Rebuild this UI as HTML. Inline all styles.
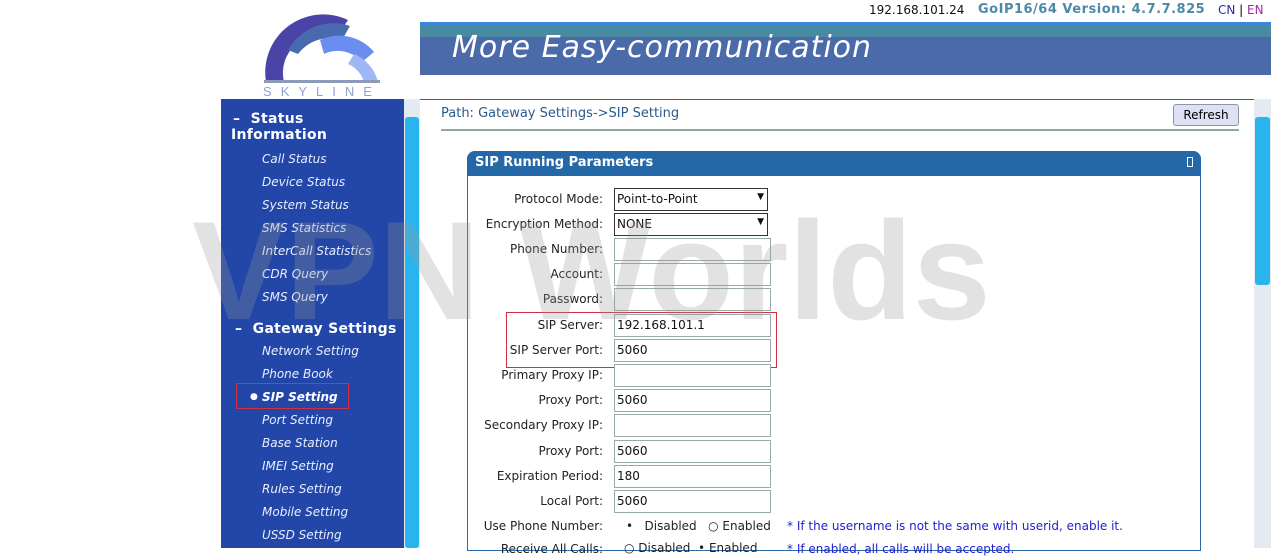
<!DOCTYPE html>
<html><head><meta charset="utf-8"><style>
*{margin:0;padding:0;box-sizing:border-box}
body{width:1272px;height:548px;overflow:hidden;background:#fff;font-family:"DejaVu Sans","Liberation Sans",sans-serif;position:relative}
.a{position:absolute}
.side{left:221px;top:99px;width:183px;height:449px;background:#2347a8;color:#fff}
.hd{position:absolute;font-weight:bold;font-size:14px;letter-spacing:.3px}
.it{position:absolute;left:41px;font-size:12px;font-style:italic;color:#e8eeff}
.lbl{position:absolute;right:669px;font-size:12px;color:#222;text-align:right;white-space:nowrap}
.inp{position:absolute;left:614px;width:157px;height:23px;border:1px solid #9aa;background:#fff;font-size:12px;padding:3px 2px;color:#111}
</style></head><body>
<svg class="a" style="left:258px;top:2px" width="130" height="96" viewBox="0 0 130 96">
<path d="M8 80 A58 58 0 0 1 90 18 L78 36 A38 38 0 0 0 26 80 Z" fill="#4a43a8"/>
<path d="M30 48 A52 52 0 0 1 92 24 L84 38 A40 40 0 0 0 40 52 Z" fill="#4a6ab0"/>
<path d="M62 38 A45 45 0 0 1 116 50 L104 60 A32 32 0 0 0 66 52 Z" fill="#6a8ef0"/>
<path d="M96 52 A40 40 0 0 1 120 80 L106 80 A28 28 0 0 0 90 62 Z" fill="#9fb8f5"/>
<rect x="6" y="78" width="116" height="3" fill="#8a9ab8"/>
<text x="64" y="94" font-size="13" fill="#8ea0d8" text-anchor="middle" letter-spacing="9" font-family="Liberation Sans">SKYLINE</text>
</svg>
<div class="a" style="left:420px;top:22px;width:851px;height:53px;background:#4a6aaa"></div>
<div class="a" style="left:420px;top:22px;width:851px;height:4px;background:#3b86d8"></div>
<div class="a" style="left:420px;top:26px;width:851px;height:11px;background:#4a8aa0"></div>
<div class="a" style="left:452px;top:30px;font-size:30px;font-style:italic;color:#fff;letter-spacing:1px">More Easy-communication</div>
<div class="a" style="left:869px;top:3px;font-size:12px;color:#111">192.168.101.24</div>
<div class="a" style="left:978px;top:2px;font-size:13px;font-weight:bold;color:#4a8aa8;letter-spacing:.5px">GoIP16/64 Version: 4.7.7.825</div>
<div class="a" style="left:1218px;top:3px;font-size:12px;color:#2a2aa0">CN <span style="color:#000">|</span> <span style="color:#a02aa0">EN</span></div>
<div class="a" style="left:420px;top:99px;width:851px;height:1px;background:#556"></div>
<div class="a side">
<div class="hd" style="left:12px;top:12px">–&nbsp; Status<br><span style="margin-left:-2px">Information</span></div>
<div class="it" style="top:53px">Call Status</div>
<div class="it" style="top:76px">Device Status</div>
<div class="it" style="top:99px">System Status</div>
<div class="it" style="top:122px">SMS Statistics</div>
<div class="it" style="top:145px">InterCall Statistics</div>
<div class="it" style="top:168px">CDR Query</div>
<div class="it" style="top:191px">SMS Query</div>
<div class="hd" style="left:14px;top:222px">–&nbsp; Gateway Settings</div>
<div class="it" style="top:245px">Network Setting</div>
<div class="it" style="top:268px">Phone Book</div>
<div class="it" style="top:291px;font-weight:bold;color:#fff"><span style="position:absolute;left:-12px;font-style:normal;font-size:9px;top:2px">●</span>SIP Setting</div>
<div class="a" style="left:15px;top:284px;width:113px;height:26px;border:1px solid #d03040"></div>
<div class="it" style="top:314px">Port Setting</div>
<div class="it" style="top:337px">Base Station</div>
<div class="it" style="top:360px">IMEI Setting</div>
<div class="it" style="top:383px">Rules Setting</div>
<div class="it" style="top:406px">Mobile Setting</div>
<div class="it" style="top:429px">USSD Setting</div>
</div>
<div class="a" style="left:404px;top:99px;width:16px;height:449px;background:#e4eaf2"></div>
<div class="a" style="left:405px;top:117px;width:14px;height:431px;background:#2ab4ee;border-radius:3px"></div>
<div class="a" style="left:1254px;top:99px;width:17px;height:449px;background:#e4eaf2"></div>
<div class="a" style="left:1255px;top:117px;width:15px;height:168px;background:#2ab4ee;border-radius:3px"></div>
<div class="a" style="left:441px;top:106px;font-size:13px;color:#2a5a8a">Path: Gateway Settings-&gt;SIP Setting</div>
<div class="a" style="left:1173px;top:104px;width:66px;height:22px;border:1px solid #8898aa;border-radius:3px;background:#e0e0f4;font-size:12px;text-align:center;line-height:20px">Refresh</div>
<div class="a" style="left:441px;top:129px;width:798px;height:2px;background:#8aa8a8"></div>
<div class="a" style="left:467px;top:151px;width:734px;height:400px;border:1px solid #2a6aa8;border-radius:8px 8px 0 0"></div>
<div class="a" style="left:467px;top:151px;width:734px;height:25px;background:#2568a8;border-radius:8px 8px 0 0;color:#fff;font-weight:bold;font-size:13px;padding:4px 8px">SIP Running Parameters<span style="position:absolute;right:8px;top:6px;width:6px;height:10px;border:1px solid #fff"></span></div>
<div class="lbl" style="top:192px">Protocol Mode:</div>
<div class="inp" style="top:188px;width:154px;border-color:#333">Point-to-Point<span style="position:absolute;right:3px;top:3px;font-size:9px">▼</span></div>
<div class="lbl" style="top:217px">Encryption Method:</div>
<div class="inp" style="top:213px;width:154px;border-color:#333">NONE<span style="position:absolute;right:3px;top:3px;font-size:9px">▼</span></div>
<div class="lbl" style="top:242px">Phone Number:</div><div class="inp" style="top:238px"></div>
<div class="lbl" style="top:267px">Account:</div><div class="inp" style="top:263px"></div>
<div class="lbl" style="top:292px">Password:</div><div class="inp" style="top:288px"></div>
<div class="lbl" style="top:318px">SIP Server:</div><div class="inp" style="top:314px">192.168.101.1</div>
<div class="lbl" style="top:343px">SIP Server Port:</div><div class="inp" style="top:339px">5060</div>
<div class="a" style="left:506px;top:312px;width:271px;height:56px;border:1px solid #d03040"></div>
<div class="lbl" style="top:368px">Primary Proxy IP:</div><div class="inp" style="top:364px"></div>
<div class="lbl" style="top:393px">Proxy Port:</div><div class="inp" style="top:389px">5060</div>
<div class="lbl" style="top:418px">Secondary Proxy IP:</div><div class="inp" style="top:414px"></div>
<div class="lbl" style="top:444px">Proxy Port:</div><div class="inp" style="top:440px">5060</div>
<div class="lbl" style="top:469px">Expiration Period:</div><div class="inp" style="top:465px">180</div>
<div class="lbl" style="top:494px">Local Port:</div><div class="inp" style="top:490px">5060</div>
<div class="lbl" style="top:519px">Use Phone Number:</div>
<div class="a" style="left:626px;top:519px;font-size:12px;color:#222">•&nbsp;&nbsp; Disabled&nbsp;&nbsp; ○ Enabled</div>
<div class="a" style="left:787px;top:519px;font-size:12px;color:#2222cc">* If the username is not the same with userid, enable it.</div>
<div class="lbl" style="top:542px">Receive All Calls:</div>
<div class="a" style="left:624px;top:541px;font-size:12px;color:#222">○ Disabled&nbsp; • Enabled</div>
<div class="a" style="left:787px;top:542px;font-size:12px;color:#2222cc">* If enabled, all calls will be accepted.</div>
<div class="a" style="left:192px;top:190px;font-size:140px;font-weight:bold;font-family:'Liberation Sans',sans-serif;color:rgba(150,150,150,0.28);letter-spacing:0px;white-space:nowrap">VPN Worlds</div>
</body></html>
